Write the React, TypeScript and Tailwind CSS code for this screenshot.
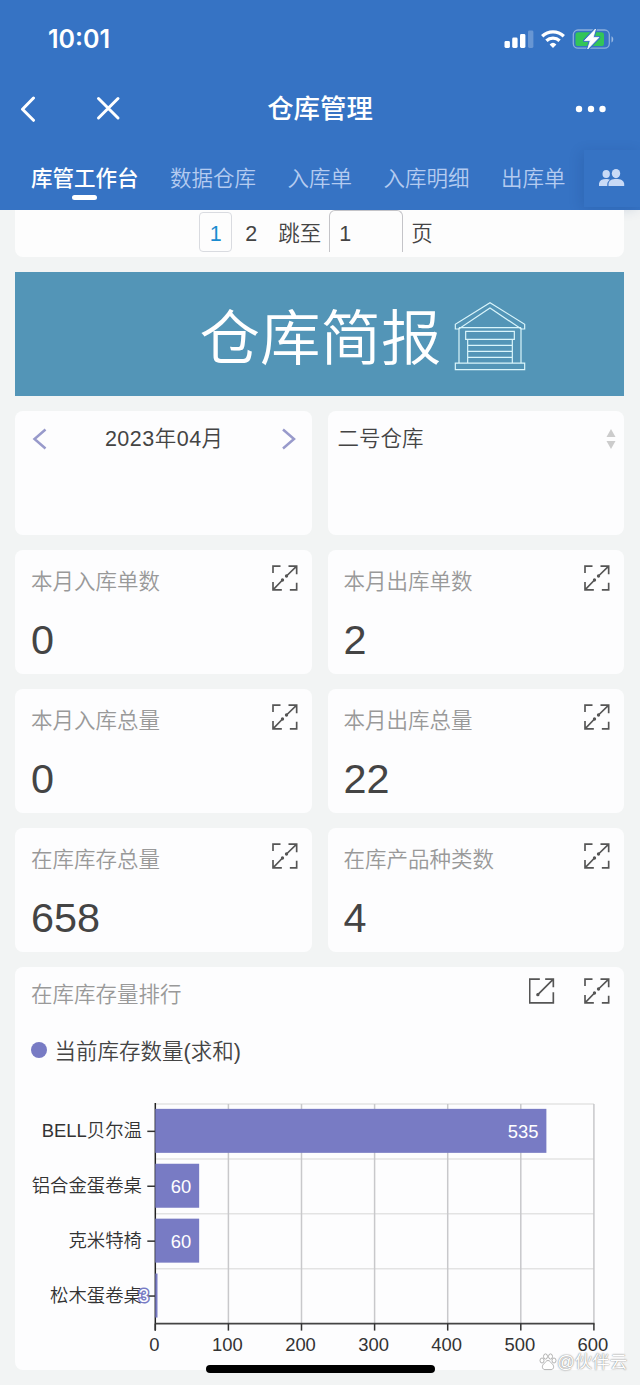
import React from "react";

const tabs = ["数据仓库", "入库单", "入库明细", "出库单"];

const stats = [
  { label: "本月入库单数", value: "0" },
  { label: "本月出库单数", value: "2" },
  { label: "本月入库总量", value: "0" },
  { label: "本月出库总量", value: "22" },
  { label: "在库库存总量", value: "658" },
  { label: "在库产品种类数", value: "4" },
];

function StatusIcons() {
  return (
    <svg width="112" height="24" viewBox="0 0 112 24" fill="#fff">
      <rect x="0.5" y="14" width="5.4" height="7" rx="1.4" />
      <rect x="8.2" y="10.500" width="5.400" height="10.500" rx="1.4" />
      <rect x="16" y="7" width="5.400" height="14" rx="1.4" />
      <rect x="24" y="3.5" width="5.400" height="17.5" rx="1.4" opacity="0.25" />
      <g fill="none" stroke="#fff" strokeWidth="3.3">
        <path d="M38.2 9.3a15.6 15.6 0 0 1 21.6 0" />
        <path d="M42.4 13.7a9.6 9.6 0 0 1 13.2 0" />
      </g>
      <path d="M49 20.9l-3.4-3.5a5 5 0 0 1 6.8 0z" />
      <rect x="69.3" y="3" width="36" height="18.200" rx="4.6" fill="none" stroke="#fff" strokeOpacity="0.42" strokeWidth="1.3" />
      <path d="M107.500 9.3c2.3.8 2.3 5.4 0 6.2z" opacity="0.5" />
      <rect x="71.500" y="5.300" width="28.500" height="13.700" rx="2.6" fill="#33c558" />
      <path d="M91.500 2L80.500 13.600h5.800l-2.600 8.400L94.900 10.400h-5.700z" stroke="#3673c4" strokeWidth="3" strokeLinejoin="round" />
      <path d="M91.500 2L80.500 13.600h5.800l-2.600 8.400L94.900 10.400h-5.700z" stroke="#fff" strokeWidth="0.800" strokeLinejoin="round" />
    </svg>
  );
}

function PeopleIcon() {
  return (
    <svg width="26" height="18" viewBox="0 0 26 18" fill="#c9daf6">
      <ellipse cx="7.2" cy="5" rx="3.7" ry="4" />
      <path d="M0 17v-2.6C.6 11.4 3 10 7 10c1.600 0 3 .2 4 .8-1.700 1.200-2.600 2.700-2.700 4.200v2z" />
      <ellipse cx="17" cy="4.6" rx="4.200" ry="4.600" />
      <path d="M9.500 17v-2.300c.5-3.400 3.400-4.700 7.800-4.700s7.200 1.300 7.900 4.700V17z" />
    </svg>
  );
}

function ExpandIcon() {
  return (
    <svg width="26" height="26" viewBox="-0.500 -1 78 78" fill="none" stroke="#555" strokeWidth="5">
      <path d="M2.500 23V2.500H25M49 2.500h24.500V27M73.500 2.500L43 32M2.500 50v23.500H29M2.500 73.500L31 44M53 73.500h20.500V52" />
      <circle cx="43" cy="32" r="2.500" fill="#555" />
      <circle cx="31" cy="44" r="2.500" fill="#555" />
    </svg>
  );
}

function OpenIcon() {
  return (
    <svg width="26" height="26" viewBox="0.500 -1 78 78" fill="none" stroke="#555" strokeWidth="5">
      <path d="M33 2.500H2.500v71h71V42M49 2.500h24.500V27M73.500 2.500L27 49" />
      <circle cx="27" cy="49" r="2.500" fill="#555" />
    </svg>
  );
}

function WarehouseIcon() {
  return (
    <svg width="72" height="70" viewBox="402 108 216 210" fill="none" stroke="#d9f5fb" strokeWidth="3.600">
      <path d="M406 192v-14L510 113l104 65v14h-10L510 129l-94 63z" />
      <path d="M417 188v106M603 188v106M417 188h186" />
      <path d="M437 199h146v24H437zM443 223v71M577 223v71M443 241h134M443 259h134M443 277h134" />
      <path d="M406 294.500h208V314H406z" />
    </svg>
  );
}

const ticks = [0, 100, 200, 300, 400, 500, 600];
const products = [
  { name: "BELL贝尔温", value: 535 },
  { name: "铝合金蛋卷桌", value: 60 },
  { name: "克米特椅", value: 60 },
  { name: "松木蛋卷桌", value: 3 },
];
const left = 140.3;
const plotTop = 16;
const step = 54.9;
const scale = 0.731;

function BarChart() {
  const bottom = plotTop + step * 4;
  return (
    <svg
      width="609"
      height="280"
      viewBox="0 0 609 280"
      className="block font-['Liberation_Sans','Noto_Sans_CJK_SC_DemiLight','Noto_Sans_CJK_SC',sans-serif] text-[18.4px]"
    >
      {[0, 1, 2, 3].map((i) => (
        <path key={i} d={`M${left} ${plotTop + i * step}H579`} stroke="#e3e3e3" strokeWidth="1.500" />
      ))}
      {ticks.slice(1).map((t) => (
        <path key={t} d={`M${left + t * scale} ${plotTop}V${bottom}`} stroke="#c8c8cb" strokeWidth="1.500" />
      ))}
      <path d={`M${left} ${plotTop - 1}V${bottom + 7}`} stroke="#222" strokeWidth="1.500" />
      <path d={`M${left} ${bottom}H579.500`} stroke="#444" strokeWidth="1.800" />
      {ticks.map((t) => (
        <g key={t}>
          <path d={`M${left + t * scale} ${bottom}v7`} stroke="#333" strokeWidth="1.500" />
          <text x={left + t * scale - 1} y={bottom + 27} textAnchor="middle" fill="#333">
            {t}
          </text>
        </g>
      ))}
      {products.map((p, i) => {
        const mid = plotTop + step * (i + 0.5) - 0.6;
        const end = left + p.value * scale;
        return (
          <g key={p.name}>
            <path d={`M${left - 8} ${mid + 0.5}h8`} stroke="#333" strokeWidth="1.500" />
            <text x="127" y={mid + 6.300} textAnchor="end" fill="#333">
              {p.name}
            </text>
            <rect x={left} y={mid - 22} width={p.value * scale} height="44" fill="#787bc4" />
            {p.value > 10 ? (
              <text x={end - 8} y={mid + 7} textAnchor="end" fill="#fff">
                {p.value}
              </text>
            ) : (
              <text x="134" y={mid + 6.500} textAnchor="end" fill="#fff" stroke="#787bc4" strokeWidth="3" paintOrder="stroke">
                {p.value}
              </text>
            )}
          </g>
        );
      })}
    </svg>
  );
}

export default function App() {
  return (
    <div className="relative flex h-[1385px] w-[640px] flex-col overflow-hidden bg-[#f2f4f4] font-['Liberation_Sans','Noto_Sans_CJK_SC_DemiLight','Noto_Sans_CJK_SC',sans-serif] text-[21.5px] text-[#444]">
      <header className="flex h-[210px] shrink-0 flex-col bg-[#3673c4] text-white">
        <div className="flex h-[77px] items-center justify-between pr-[24px] pl-[48px]">
          <span className="font-['Inter',sans-serif] text-[25px] leading-[30px] font-semibold">10:01</span>
          <StatusIcons />
        </div>
        <div className="flex h-[62px] items-center px-[20px]">
          <svg width="104" height="28" viewBox="0 0 104 28" fill="none" stroke="#fff" strokeWidth="3" strokeLinecap="round" strokeLinejoin="round">
            <path d="M13.500 4L2.500 15.300l11 11" />
            <path d="M78.500 4.500l19.500 19.500M98 4.500L78.500 24" />
          </svg>
          <h1 className="flex-1 pt-[2px] text-center font-['Liberation_Sans','Noto_Sans_CJK_SC',sans-serif] text-[26.4px] leading-[34px] font-medium">仓库管理</h1>
          <svg width="104" height="28" viewBox="0 0 104 28" fill="#fff">
            <circle cx="63" cy="15" r="3.200" />
            <circle cx="75" cy="15" r="3.200" />
            <circle cx="86.500" cy="15" r="3.200" />
          </svg>
        </div>
        <div className="flex h-[71px] items-start justify-between pl-[31px]">
          <div className="flex flex-1 gap-[31.5px] overflow-hidden pt-[25px] leading-[30px] whitespace-nowrap text-[#b4cbf0]">
            <div className="flex flex-col items-center font-['Liberation_Sans','Noto_Sans_CJK_SC',sans-serif] font-medium text-white">
              <span>库管工作台</span>
              <span className="mt-[0.500px] h-[5px] w-[25px] rounded-full bg-white" />
            </div>
            {tabs.map((t) => (
              <span key={t}>{t}</span>
            ))}
          </div>
          <div className="mt-[11px] flex h-[57px] w-[56px] items-center justify-center bg-[#3673c4] pb-[2px] shadow-[-3px_2px_12px_rgba(20,50,110,0.16)]">
            <PeopleIcon />
          </div>
        </div>
      </header>

      <main className="flex flex-col gap-[15.5px] pr-[16px] pl-[15px]">
        <section className="flex h-[46.5px] items-start justify-center overflow-hidden rounded-b-[8px] bg-[#fdfdfd] pr-[7px] leading-[40px]">
          <span className="mt-[2px] flex h-[40px] w-[33px] items-center justify-center rounded-[4px] border-[1.500px] border-[#d9dbe0] pt-[3px] text-[#1a8cd0]">1</span>
          <span className="mt-[4px] ml-[13px]">2</span>
          <span className="mt-[4px] ml-[21px]">跳至</span>
          <span className="ml-[8px] h-[42px] w-[74px] rounded-t-[6px] border-x-[1.500px] border-t border-[#c4c4c8] pt-[3px] pl-[9px]">1</span>
          <span className="mt-[4px] ml-[8px]">页</span>
        </section>

        <section className="flex h-[123.5px] items-start bg-[#5395b7] pl-[184.500px] text-white">
          <span className="mt-[23px] text-[60.5px] leading-[88px]">仓库简报</span>
          <span className="mt-[29px] ml-[12.500px]">
            <WarehouseIcon />
          </span>
        </section>

        <div className="grid grid-cols-2 gap-x-[16px] gap-y-[15.5px]">
          <section className="flex h-[123.5px] items-start justify-between rounded-[8px] bg-[#fdfdfe] pt-[13px] pr-[15px] pl-[17px]">
            <svg className="mt-[4px]" width="16" height="22" viewBox="0 0 16 22" fill="none" stroke="#989acb" strokeWidth="2.500">
              <path d="M13.500 1.500L2.500 11l11 9.500" />
            </svg>
            <span className="leading-[30px] tracking-[0.500px]">2023年04月</span>
            <svg className="mt-[4px]" width="16" height="22" viewBox="0 0 16 22" fill="none" stroke="#989acb" strokeWidth="2.500">
              <path d="M2 1.500L13 11 2 20.500" />
            </svg>
          </section>
          <section className="flex h-[123.5px] items-start justify-between rounded-[8px] bg-[#fdfdfe] pt-[13px] pr-[8px] pl-[10px]">
            <span className="leading-[30px]">二号仓库</span>
            <svg className="mt-[4px]" width="10" height="22" viewBox="0 0 10 22" fill="#ccc">
              <path d="M0.500 9L5 1l4.500 8zM0.500 13L5 21l4.500-8z" />
            </svg>
          </section>
          {stats.map((s) => (
            <section key={s.label} className="flex h-[123.5px] flex-col rounded-[8px] bg-[#fdfdfe] pr-[14px] pl-[16px]">
              <div className="flex items-start justify-between pt-[15px]">
                <span className="pt-[1px] leading-[32px] text-[#999]">{s.label}</span>
                <ExpandIcon />
              </div>
              <span className="mt-[19px] text-[41.4px] leading-[46px]">{s.value}</span>
            </section>
          ))}
        </div>

        <section className="flex h-[402.5px] flex-col rounded-[8px] bg-[#fdfdfe]">
          <div className="flex h-[43px] items-start pt-[11px] pr-[14px] pl-[16px]">
            <span className="flex-1 pt-[1px] leading-[32px] text-[#999]">在库库存量排行</span>
            <OpenIcon />
            <span className="ml-[29.500px]">
              <ExpandIcon />
            </span>
          </div>
          <div className="mt-[24px] mb-[22px] flex h-[32px] items-center pl-[16px] leading-[32px]">
            <span className="mr-[8px] h-[15.500px] w-[15.500px] rounded-full bg-[#787bc4]" />
            <span className="pt-[3px]">当前库存数量(求和)</span>
          </div>
          <BarChart />
        </section>
      </main>

      <div className="absolute top-[1365px] left-[205.5px] h-[8px] w-[229px] rounded-full bg-black" />
      <div className="absolute top-[1349px] left-[539px] flex items-center text-[17.500px] leading-[24px] text-white">
        <svg width="18" height="18" viewBox="0 0 18 18" fill="#fff" stroke="#aaa" strokeWidth="0.900">
          <ellipse cx="3" cy="7.500" rx="2" ry="2.500" />
          <ellipse cx="6.500" cy="3.500" rx="2" ry="2.600" />
          <ellipse cx="11.500" cy="3.500" rx="2" ry="2.600" />
          <ellipse cx="15" cy="7.500" rx="2" ry="2.500" />
          <path d="M9 7.500c2 0 2.600 2 4.200 3.400 2.600 2.300 1.300 5.800-1.200 5.700-2-.1-4-.1-6 0-2.500.1-3.800-3.400-1.200-5.700C6.400 9.500 7 7.500 9 7.500z" />
        </svg>
        <span className="pt-[1px] [text-shadow:0_0_1px_#888,0_0_2px_#999]">@伙伴云</span>
      </div>
    </div>
  );
}
